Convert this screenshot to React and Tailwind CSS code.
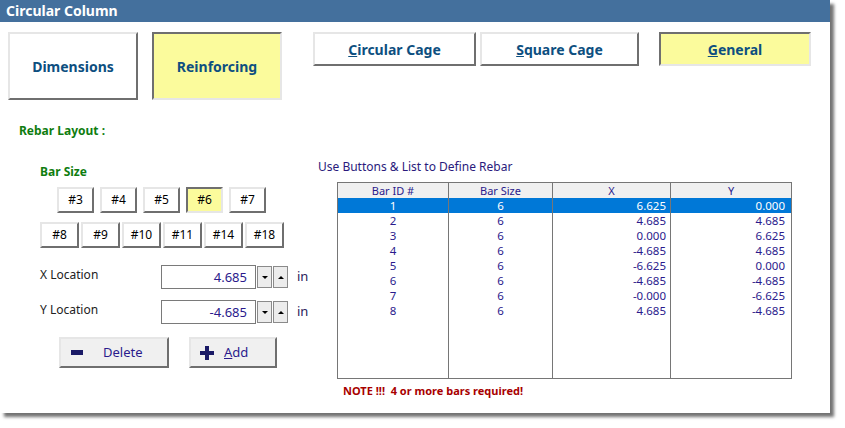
import { useState } from "react";

const raised = "border-2 border-t-[#e6e6e6] border-l-[#e6e6e6] border-r-[#6f6f6f] border-b-[#6f6f6f]";
const sunken = "border-2 border-t-[#6f6f6f] border-l-[#6f6f6f] border-r-[#e6e6e6] border-b-[#e6e6e6]";
const yellow = "bg-[#fbfb9c]";

const rows = [
  { id: 1, size: 6, x: "6.625", y: "0.000" },
  { id: 2, size: 6, x: "4.685", y: "4.685" },
  { id: 3, size: 6, x: "0.000", y: "6.625" },
  { id: 4, size: 6, x: "-4.685", y: "4.685" },
  { id: 5, size: 6, x: "-6.625", y: "0.000" },
  { id: 6, size: 6, x: "-4.685", y: "-4.685" },
  { id: 7, size: 6, x: "-0.000", y: "-6.625" },
  { id: 8, size: 6, x: "4.685", y: "-4.685" },
];

function BarBtn({ label, active, onClick, w }) {
  return (
    <button
      onClick={onClick}
      className={`${w} h-[26px] shrink-0 text-[12px] text-black flex items-center justify-center ${active ? `${yellow} ${sunken}` : `bg-white ${raised}`}`}
    >
      {label}
    </button>
  );
}

function Spin({ value }) {
  return (
    <div className="flex items-center h-[24px] shrink-0">
      <div className="w-[95px] h-[24px] border border-[#7a7a7a] bg-white text-right pr-[8px] text-[13px] leading-[22px] text-[#2a1a8c]">
        {value}
      </div>
      <div className="w-[15px] h-[22px] ml-[1px] bg-[#ececec] border border-[#8a8a8a] flex items-center justify-center">
        <span className="block w-0 h-0 border-l-[3px] border-r-[3px] border-t-[3px] border-l-transparent border-r-transparent border-t-black" />
      </div>
      <div className="w-[15px] h-[22px] ml-[1px] bg-[#ececec] border border-[#8a8a8a] flex items-center justify-center">
        <span className="block w-0 h-0 border-l-[3px] border-r-[3px] border-b-[3px] border-l-transparent border-r-transparent border-b-black" />
      </div>
      <span className="ml-[9px] text-[13px] text-[#2a1a5c]">in</span>
    </div>
  );
}

export default function App() {
  const [barSize, setBarSize] = useState("#6");
  const [selected, setSelected] = useState(1);

  const cell = (r) =>
    `h-[15px] text-[11.5px] leading-[15px] ${selected === r.id ? "bg-[#0078d7] text-white" : "text-[#2a1a8c]"}`;

  return (
    <div className="w-[845px] h-[428px] bg-white" style={{ fontFamily: '"Noto Sans", "Open Sans", sans-serif' }}>
      <div className="w-[830px] h-[413px] bg-white shadow-[4px_4px_3px_rgba(0,0,0,0.55)] flex flex-col">
        {/* Title bar */}
        <div className="h-[22px] bg-[#44709d] text-white font-bold text-[14px] leading-[22px] pl-[6px]">
          Circular Column
        </div>

        {/* Tabs */}
        <div className="flex items-start pt-[10px] pl-[8px]">
          <button className={`w-[130px] h-[68px] bg-white ${raised} text-[#0d4f80] font-bold text-[14px]`}>
            Dimensions
          </button>
          <button className={`ml-[14px] w-[130px] h-[68px] ${yellow} ${sunken} text-[#0d4f80] font-bold text-[14px]`}>
            Reinforcing
          </button>
          <button className={`ml-[31px] w-[163px] h-[34px] bg-white ${raised} text-[#0d4f80] font-bold text-[14px]`}>
            <span className="underline">C</span>ircular Cage
          </button>
          <button className={`ml-[4px] w-[159px] h-[34px] bg-white ${raised} text-[#0d4f80] font-bold text-[14px]`}>
            <span className="underline">S</span>quare Cage
          </button>
          <button className={`ml-[20px] w-[152px] h-[34px] ${yellow} ${sunken} text-[#0d4f80] font-bold text-[14px]`}>
            <span className="underline">G</span>eneral
          </button>
        </div>

        {/* Body */}
        <div className="flex">
          {/* Left */}
          <div className="w-[318px] shrink-0 pl-[19px] pt-[23px]">
            <div className="text-[12px] font-bold text-[#0f7d0f] leading-[16px]">Rebar Layout :</div>
            <div className="pl-[21px] mt-[25px]">
              <div className="text-[12px] font-bold text-[#0f7d0f] leading-[16px]">Bar Size</div>
              <div className="flex gap-[6px] ml-[17px] mt-[7px]">
                {["#3", "#4", "#5", "#6", "#7"].map((b) => (
                  <BarBtn key={b} label={b} w="w-[37px]" active={barSize === b} onClick={() => setBarSize(b)} />
                ))}
              </div>
              <div className="flex gap-[2px] mt-[9px]">
                {["#8", "#9", "#10", "#11", "#14", "#18"].map((b) => (
                  <BarBtn key={b} label={b} w="w-[39px]" active={barSize === b} onClick={() => setBarSize(b)} />
                ))}
              </div>

              <div className="flex items-center mt-[17px]">
                <span className="w-[121px] shrink-0 text-[12px] text-[#222] -mt-[4px]">X Location</span>
                <Spin value="4.685" />
              </div>
              <div className="flex items-center mt-[11px]">
                <span className="w-[121px] shrink-0 text-[12px] text-[#222] -mt-[4px]">Y Location</span>
                <Spin value="-4.685" />
              </div>

              <div className="flex mt-[13px] ml-[19px]">
                <button className={`w-[110px] h-[31px] bg-[#f0f0f0] ${raised} flex items-center text-[13px] text-[#2a1a8c]`}>
                  <span className="ml-[10px] w-[12px] h-[5px] bg-[#1a1a66]" />
                  <span className="ml-[20px]">Delete</span>
                </button>
                <button className={`ml-[20px] w-[88px] h-[31px] bg-[#f0f0f0] ${raised} flex items-center text-[13px] text-[#2a1a8c]`}>
                  <svg className="ml-[9px]" width="14" height="14" viewBox="0 0 14 14">
                    <path d="M5 0h4v5h5v4H9v5H5V9H0V5h5z" fill="#1a1a66" />
                  </svg>
                  <span className="ml-[10px]"><span className="underline">A</span>dd</span>
                </button>
              </div>
            </div>
          </div>

          {/* Right */}
          <div className="pt-[59px]">
            <div className="text-[12px] text-[#2a1a7c] leading-[16px]">Use Buttons &amp; List to Define Rebar</div>
            <div className="ml-[19px] mt-[7px] w-[455px] h-[197px] border border-[#767676] flex flex-col">
              <div className="flex h-[15px] bg-[#f0f0f0] text-[11px] leading-[15px] text-[#2a1a8c]">
                <div className="w-[111px] text-center border-r border-[#767676]">Bar ID #</div>
                <div className="w-[104px] text-center border-r border-[#767676]">Bar Size</div>
                <div className="w-[118px] text-center border-r border-[#767676]">X</div>
                <div className="flex-1 text-center">Y</div>
              </div>
              <div className="flex-1 flex">
                <div className="w-[111px] border-r border-[#767676]">
                  {rows.map((r) => (
                    <div key={r.id} onClick={() => setSelected(r.id)} className={`${cell(r)} text-center`}>{r.id}</div>
                  ))}
                </div>
                <div className="w-[104px] border-r border-[#767676]">
                  {rows.map((r) => (
                    <div key={r.id} onClick={() => setSelected(r.id)} className={`${cell(r)} text-center`}>{r.size}</div>
                  ))}
                </div>
                <div className="w-[118px] border-r border-[#767676]">
                  {rows.map((r) => (
                    <div key={r.id} onClick={() => setSelected(r.id)} className={`${cell(r)} text-right pr-[4px]`}>{r.x}</div>
                  ))}
                </div>
                <div className="flex-1">
                  {rows.map((r) => (
                    <div key={r.id} onClick={() => setSelected(r.id)} className={`${cell(r)} text-right pr-[6px]`}>{r.y}</div>
                  ))}
                </div>
              </div>
            </div>
            <div className="ml-[25px] mt-[4px] text-[11px] font-bold text-[#a80000]">
              NOTE !!!&nbsp; 4 or more bars required!
            </div>
          </div>
        </div>
      </div>
    </div>
  );
}
